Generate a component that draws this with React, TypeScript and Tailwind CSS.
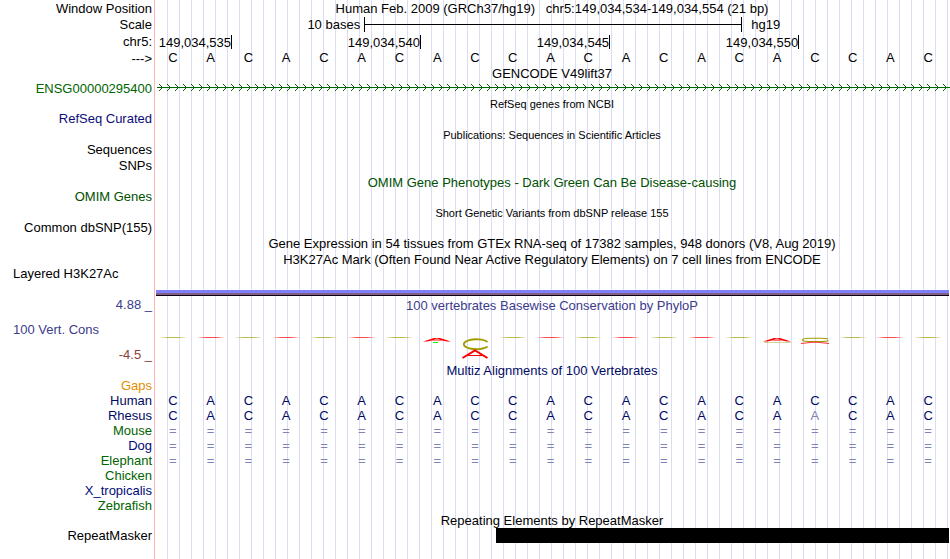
import type { ReactNode } from "react";

const BASES = "CACACACACCACACACACCAC".split("");
const RULER = ["149,034,535", "149,034,540", "149,034,545", "149,034,550"];

const SPECIES = [
  { name: "Human", color: "text-[#000a64]", row: BASES },
  { name: "Rhesus", color: "text-[#000a64]", row: BASES.map((b, i) => (i === 17 ? "a" : b)) },
  { name: "Mouse", color: "text-[#006400]", row: BASES.map(() => "=") },
  { name: "Dog", color: "text-[#000a78]", row: BASES.map(() => "=") },
  { name: "Elephant", color: "text-[#006400]", row: BASES.map(() => "=") },
  { name: "Chicken", color: "text-[#006400]", row: [] },
  { name: "X_tropicalis", color: "text-[#000a78]", row: [] },
  { name: "Zebrafish", color: "text-[#006400]", row: [] },
];

type RowProps = {
  label?: string;
  height?: string;
  color?: string;
  children?: ReactNode;
};

function Row({ label, height = "h-[15px]", color = "text-black", children }: RowProps) {
  return (
    <div className={`flex items-center ${height} ${color}`}>
      <div className="w-[154px] shrink-0 pr-[2px] text-right">{label}</div>
      <div className="h-full min-w-0 flex-1">{children}</div>
    </div>
  );
}

function Title({ small, children }: { small?: boolean; children: ReactNode }) {
  return (
    <h2 className={`flex h-full items-center justify-center whitespace-pre ${small ? "pt-1 text-[11px]" : ""}`}>
      {children}
    </h2>
  );
}

function Letters({ row }: { row: string[] }) {
  return (
    <div className="grid h-full grid-cols-21 items-center pr-[3px] text-center">
      {row.map((b, i) => (
        <span key={i} className={b === "=" || b === "a" ? "text-[#8084b4]" : ""}>
          {b.toUpperCase()}
        </span>
      ))}
    </div>
  );
}

function GeneArrows() {
  return (
    <svg className="block h-[14px] w-full" shapeRendering="crispEdges">
      <defs>
        <pattern id="arrows" x="4" width="8" height="15" patternUnits="userSpaceOnUse">
          <path d="M1 3h1v1h1v1h1v1h1v1h-1v1h-1v1h-1v1h-1v-1h1v-1h1v-1h1v-1h-1v-1h-1v-1h-1z" fill="#006400" />
        </pattern>
      </defs>
      <rect x="3" y="6" width="100%" height="1" fill="#006400" />
      <rect x="4" width="100%" height="15" fill="url(#arrows)" />
    </svg>
  );
}

// One column of the conservation logo, drawn around the zero line at y=1
function LogoMark({ index, base }: { index: number; base: string }) {
  const red = "#ff0000";
  const olive = "#a09c00";
  let marks = (
    <path d="M0 1.5L9 1h10l9 .5L19 2H9z" fill={base === "A" ? red : olive} opacity="0.7" />
  );
  if (index === 7) {
    marks = (
      <>
        <path d="M0 5.6L11 2h6l11 3.6h-4L19 4.4H9L4 5.6zM10.5 3.6h7L14 2.6z" fill={red} fillRule="evenodd" />
        <path d="M10 6h5v1h-5z" fill="#00ff00" />
      </>
    );
  }
  if (index === 8) {
    marks = (
      <>
        <path d="M26.5 6A12.5 5 0 1 0 26.5 10.5" fill="none" stroke={olive} strokeWidth="1.8" />
        <path d="M1.5 22L14 14.5L26.5 22" fill="none" stroke={red} strokeWidth="2" />
        <path d="M7 19.5h14" fill="none" stroke={red} strokeWidth="1" />
      </>
    );
  }
  if (index === 16) {
    marks = (
      <>
        <path d="M0 5.6L11 2h6l11 3.6h-4L19 4.4H9L4 5.6zM10.5 3.6h7L14 2.6z" fill={red} fillRule="evenodd" />
        <path d="M1 6h27v.8H1z" fill={olive} opacity="0.5" />
      </>
    );
  }
  if (index === 17) {
    marks = (
      <>
        <path d="M27 3.2Q26 2.3 20 2.3H8Q2 2.3 1.5 3.8T8 5.5H20Q26 5.5 27.500 4.500" fill="none" stroke={olive} strokeWidth="1.1" />
        <path d="M0 7.500L12 6.200h4L28 7.500" fill="none" stroke={red} strokeWidth="0.8" />
      </>
    );
  }
  return (
    <svg className="h-6 w-7 justify-self-center" viewBox="0 0 28 24">
      {marks}
    </svg>
  );
}

export default function App() {
  return (
    <main className="min-h-screen overflow-hidden bg-white bg-[linear-gradient(#ffb4b4,#ffb4b4),repeating-linear-gradient(to_right,#dcdcf5_0_1px,transparent_1px_12px)] bg-[position:154px_0,167px_0] bg-[size:1px_100%,100%_100%] bg-no-repeat font-['Liberation_Sans',Arial,sans-serif] text-[13px] leading-[15px]">
      <Row label="Window Position" height="h-4">
        <Title>{"Human Feb. 2009 (GRCh37/hg19)   chr5:149,034,534-149,034,554 (21 bp)"}</Title>
      </Row>
      <Row label="Scale" height="h-[17px]">
        <div className="flex h-full items-center">
          <span className="w-[26.4%] pr-1 text-right">10 bases</span>
          <span className="flex h-[15px] w-[47.5%] items-center border-x border-black">
            <span className="h-px w-full bg-black" />
          </span>
          <span className="pl-[9px]">hg19</span>
        </div>
      </Row>
      <Row label="chr5:" height="h-[17px]">
        <div className="flex pt-[2px]">
          {RULER.map((pos, i) => (
            <span
              key={pos}
              className={`h-[14px] border-r border-black text-right ${i === 0 ? "w-[9.8%]" : "w-[23.75%]"}`}
            >
              {pos}
            </span>
          ))}
        </div>
      </Row>
      <Row label="--->" height="h-4">
        <div className="h-[14px]">
          <Letters row={BASES} />
        </div>
      </Row>

      <Row>
        <Title>GENCODE V49lift37</Title>
      </Row>
      <Row label="ENSG00000295400" height="h-[14px]" color="text-[#006400]">
        <GeneArrows />
      </Row>
      <Row>
        <Title small>RefSeq genes from NCBI</Title>
      </Row>
      <Row label="RefSeq Curated" height="h-4" color="text-[#0c0c78]" />
      <Row>
        <Title small>Publications: Sequences in Scientific Articles</Title>
      </Row>
      <Row label="Sequences" height="h-4" />
      <Row label="SNPs" height="h-4" />
      <Row color="text-[#005000]">
        <div className="h-full pt-[3px]">
          <Title>OMIM Gene Phenotypes - Dark Green Can Be Disease-causing</Title>
        </div>
      </Row>
      <Row label="OMIM Genes" height="h-4" color="text-[#005000]" />
      <Row>
        <Title small>Short Genetic Variants from dbSNP release 155</Title>
      </Row>
      <Row label="Common dbSNP(155)" height="h-4" />
      <Row height="h-[17px]">
        <Title>Gene Expression in 54 tissues from GTEx RNA-seq of 17382 samples, 948 donors (V8, Aug 2019)</Title>
      </Row>
      <Row height="h-[14px]">
        <Title>H3K27Ac Mark (Often Found Near Active Regulatory Elements) on 7 cell lines from ENCODE</Title>
      </Row>

      <div className="flex h-[30px]">
        <div className="w-[154px] shrink-0 pl-[13px]">Layered H3K27Ac</div>
        <div className="flex flex-1 flex-col justify-end pl-[2px] pr-px">
          <div className="h-[3px] bg-[#8080ff]" />
          <div className="h-[3px] border-b border-[#100018] bg-[#806080]" />
        </div>
      </div>

      <div className="flex h-[67px] text-[#3c3c8c]">
        <div className="flex w-[154px] shrink-0 flex-col justify-between pb-px pr-[2px] pt-px">
          <span className="text-right">4.88 _</span>
          <span className="pl-[13px]">100 Vert. Cons</span>
          <span className="text-right text-[#8c3c3c]">-4.5 _</span>
        </div>
        <div className="flex-1">
          <div className="h-[18px]">
            <Title>100 vertebrates Basewise Conservation by PhyloP</Title>
          </div>
          <div className="grid grid-cols-21 pr-[3px] pt-[22px]">
            {BASES.map((b, i) => (
              <LogoMark key={i} index={i} base={b} />
            ))}
          </div>
        </div>
      </div>

      <Row color="text-[#000a64]">
        <Title>Multiz Alignments of 100 Vertebrates</Title>
      </Row>
      <Row label="Gaps" color="text-[#e68c00]" />
      {SPECIES.map((s) => (
        <Row key={s.name} label={s.name} color={s.color}>
          <Letters row={s.row} />
        </Row>
      ))}

      <Row>
        <Title>Repeating Elements by RepeatMasker</Title>
      </Row>
      <Row label="RepeatMasker">
        <div className="mr-px ml-[43%] h-[15px] bg-black" />
      </Row>
    </main>
  );
}
